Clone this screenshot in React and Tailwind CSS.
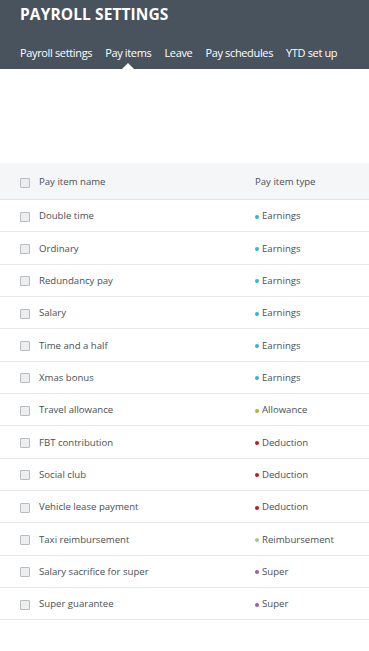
import React from "react";

const tabs = ["Payroll settings", "Pay items", "Leave", "Pay schedules", "YTD set up"];

const items = [
  { name: "Double time", type: "Earnings", dot: "bg-[#2fb5d8]" },
  { name: "Ordinary", type: "Earnings", dot: "bg-[#2fb5d8]" },
  { name: "Redundancy pay", type: "Earnings", dot: "bg-[#2fb5d8]" },
  { name: "Salary", type: "Earnings", dot: "bg-[#2fb5d8]" },
  { name: "Time and a half", type: "Earnings", dot: "bg-[#2fb5d8]" },
  { name: "Xmas bonus", type: "Earnings", dot: "bg-[#2fb5d8]" },
  { name: "Travel allowance", type: "Allowance", dot: "bg-[#c2a83e]" },
  { name: "FBT contribution", type: "Deduction", dot: "bg-[#c0172e]" },
  { name: "Social club", type: "Deduction", dot: "bg-[#c0172e]" },
  { name: "Vehicle lease payment", type: "Deduction", dot: "bg-[#c0172e]" },
  { name: "Taxi reimbursement", type: "Reimbursement", dot: "bg-[#9fc98f]" },
  { name: "Salary sacrifice for super", type: "Super", dot: "bg-[#a35ca8]" },
  { name: "Super guarantee", type: "Super", dot: "bg-[#a35ca8]" },
];

const Checkbox = () => (
  <span className="w-[10px] h-[10px] border border-[#b9bcbf] bg-[#eceeef] rounded-[1px] shrink-0" />
);

const App = () => {
  return (
    <div className="w-[369px] min-h-[651px] bg-white font-['Open_Sans',sans-serif] text-[#4a4f55]">
      {/* Header */}
      <div className="relative h-[69px] bg-[#49535e] px-[20px] pt-[4px]">
        <h1 className="text-white text-[15.5px] font-bold tracking-[0.1px] leading-[20px]">PAYROLL SETTINGS</h1>
        <nav className="flex gap-[13px] mt-[21px] text-white text-[11px] tracking-[-0.35px] leading-[16px] whitespace-nowrap">
          {tabs.map((t) => (
            <span key={t} className="relative">
              {t}
              {t === "Pay items" && (
                <span className="absolute left-1/2 -translate-x-1/2 top-[18px] w-0 h-0 border-l-[6px] border-r-[6px] border-b-[6px] border-l-transparent border-r-transparent border-b-white" />
              )}
            </span>
          ))}
        </nav>
      </div>

      {/* Table */}
      <div className="mt-[94px] text-[9.6px]">
        <div className="flex items-center h-[37px] pt-[3px] bg-[#f5f6f7] border-b border-[#e3e5e7] px-[20px]">
          <Checkbox />
          <span className="ml-[9px] flex-1">Pay item name</span>
          <span className="w-[94px]">Pay item type</span>
        </div>
        {items.map((it) => (
          <div key={it.name} className="flex items-center h-[32.33px] pt-[2px] border-b border-[#e6e8ea] px-[20px]">
            <Checkbox />
            <span className="ml-[9px] flex-1">{it.name}</span>
            <span className="w-[94px] flex items-center">
              <span className={`w-[4px] h-[4px] rounded-full ${it.dot} mr-[3px]`} />
              {it.type}
            </span>
          </div>
        ))}
      </div>
    </div>
  );
};

export default App;
